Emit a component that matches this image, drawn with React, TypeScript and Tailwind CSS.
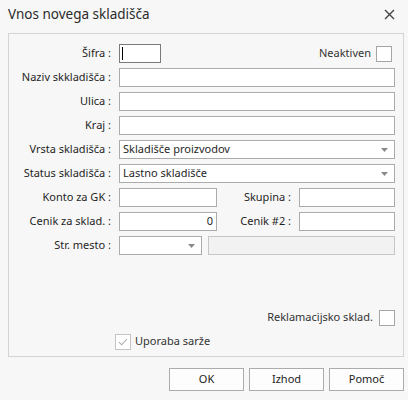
import React from "react";

const font = { fontFamily: '"Noto Sans", "Open Sans", sans-serif' };

const Label: React.FC<{ text: string }> = ({ text }) => (
  <span className="w-[102px] shrink-0 text-right whitespace-nowrap">{text}</span>
);

const Arrow: React.FC = () => (
  <svg width="7" height="4" viewBox="0 0 7 4" className="shrink-0">
    <path d="M0 0H7L3.5 4Z" fill="#8a8a8a" />
  </svg>
);

const Box: React.FC<{ className?: string; children?: React.ReactNode }> = ({ className = "", children }) => (
  <div className={`h-[19px] border border-[#ababab] bg-white flex items-center ${className}`}>{children}</div>
);

const Check: React.FC<{ checked?: boolean; disabled?: boolean }> = ({ checked, disabled }) => (
  <div
    className={`w-[16px] h-[16px] shrink-0 bg-white border flex items-center justify-center ${
      disabled ? "border-[#c4c4c4]" : "border-[#a6a6a6]"
    }`}
  >
    {checked && (
      <svg width="10" height="8" viewBox="0 0 10 8">
        <path d="M1 4.2L3.6 6.8L9 1" fill="none" stroke="#a8a8a8" strokeWidth="1.1" />
      </svg>
    )}
  </div>
);

export default function App() {
  return (
    <div className="w-[408px] h-[400px] bg-[#f7f7f7] text-[11px] text-[#1f1f1f] overflow-hidden" style={font}>
      {/* title bar */}
      <div className="h-[33px] flex items-center justify-between pl-[8px] pr-[13px]">
        <span className="text-[13.5px] text-[#2a2a2a] leading-none -mt-[3px]">Vnos novega skladišča</span>
        <svg width="11" height="11" viewBox="0 0 11 11" className="-mt-[4px]">
          <path d="M1 1L10 10M10 1L1 10" stroke="#444" strokeWidth="1.4" />
        </svg>
      </div>

      {/* main panel */}
      <div className="ml-[8px] w-[396px] border border-[#d4d4d4] pt-[10px] pb-[5px] pr-[8px] flex flex-col">
        <div className="flex flex-col gap-[5px]">
          <div className="flex items-center h-[19px]">
            <Label text="Šifra :" />
            <div className="ml-[8px] w-[42px] h-[19px] border border-[#7a7a7a] bg-white flex items-center pl-[2px]">
              <div className="w-[1px] h-[13px] bg-black" />
            </div>
            <div className="flex-1" />
            <span className="text-[#333] mr-[5px]">Neaktiven</span>
            <div className="mr-[3px]">
              <Check />
            </div>
          </div>

          {["Naziv skkladišča :", "Ulica :", "Kraj :"].map((l) => (
            <div key={l} className="flex items-center h-[19px]">
              <Label text={l} />
              <Box className="ml-[8px] flex-1" />
            </div>
          ))}

          <div className="flex items-center h-[19px]">
            <Label text="Vrsta skladišča :" />
            <Box className="ml-[8px] flex-1 pl-[3px] pr-[6px] justify-between">
              <span>Skladišče proizvodov</span>
              <Arrow />
            </Box>
          </div>

          <div className="flex items-center h-[19px]">
            <Label text="Status skladišča :" />
            <Box className="ml-[8px] flex-1 pl-[3px] pr-[6px] justify-between">
              <span>Lastno skladišče</span>
              <Arrow />
            </Box>
          </div>

          <div className="flex items-center h-[19px]">
            <Label text="Konto za GK :" />
            <Box className="ml-[8px] w-[98px]" />
            <span className="w-[74px] text-right whitespace-nowrap">Skupina :</span>
            <Box className="ml-[8px] flex-1" />
          </div>

          <div className="flex items-center h-[19px]">
            <Label text="Cenik za sklad. :" />
            <Box className="ml-[8px] w-[98px] justify-end pr-[3px]">
              <span>0</span>
            </Box>
            <span className="w-[74px] text-right whitespace-nowrap">Cenik #2 :</span>
            <Box className="ml-[8px] flex-1" />
          </div>

          <div className="flex items-center h-[19px]">
            <Label text="Str. mesto :" />
            <Box className="ml-[8px] w-[83px] justify-end pr-[6px]">
              <Arrow />
            </Box>
            <div className="ml-[6px] flex-1 h-[19px] border border-[#c6c6c6] bg-[#f2f2f2]" />
          </div>
        </div>

        <div className="mt-[53px] h-[19px] flex items-center justify-end">
          <span className="text-[#333] mr-[6px]">Reklamacijsko sklad.</span>
          <Check />
        </div>

        <div className="mt-[5px] h-[19px] flex items-center pl-[106px]">
          <Check checked disabled />
          <span className="ml-[4px] text-[#333]">Uporaba sarže</span>
        </div>
      </div>

      {/* buttons */}
      <div className="mt-[11px] flex justify-end gap-[5px] pr-[4px]">
        {["OK", "Izhod", "Pomoč"].map((b) => (
          <button
            key={b}
            className="w-[75px] h-[23px] border border-[#acacac] bg-[#fdfdfd] text-[11px] text-[#222] flex items-center justify-center"
          >
            {b}
          </button>
        ))}
      </div>
    </div>
  );
}
